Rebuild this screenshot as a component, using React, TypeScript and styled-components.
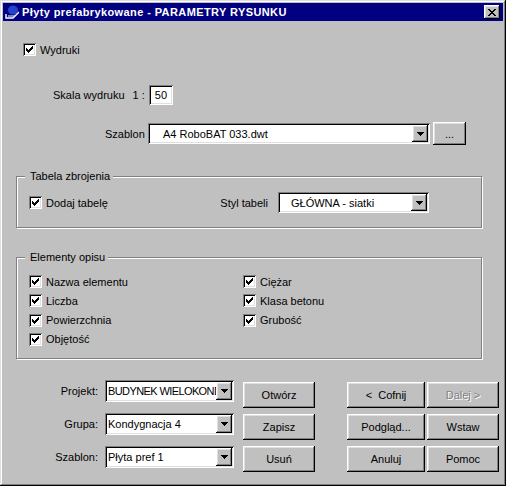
import React from 'react'
import styled, { createGlobalStyle } from 'styled-components'

const GlobalStyle = createGlobalStyle`
  html, body {
    margin: 0;
    padding: 0;
    background: #c0c0c0;
  }
  body {
    font-family: "Liberation Sans", Arial, sans-serif;
    font-size: 11px;
    color: #000;
  }
`

// classic 3D edges
const raised = 'inset -1px -1px #000, inset 1px 1px #fff, inset -2px -2px #808080, inset 2px 2px #dfdfdf'
const sunken = 'inset 1px 1px #808080, inset -1px -1px #fff, inset 2px 2px #000, inset -2px -2px #dfdfdf'

const CHECK_COLUMNS = [[3, 5], [4, 6], [5, 7], [6, 6], [7, 5], [8, 4], [9, 3]]
const CLOSE_ROWS = [[[0, 2], [6, 2]], [[1, 2], [5, 2]], [[2, 4]], [[3, 2]], [[2, 4]], [[1, 2], [5, 2]], [[0, 2], [6, 2]]]

export default function App () {
  return (
    <>
      <GlobalStyle />
      <Window>
        <TitleBar>
          <svg width="16" height="16" viewBox="0 0 16 16" style={{ marginRight: 3 }}>
            <ellipse cx="10" cy="6" rx="5" ry="4.5" fill="#2244cc" />
            <path d="M3 10 L3 14 L10 14 L16 8" stroke="#fff" strokeWidth="1.4" fill="none" />
            <path d="M5 12 L12 12" stroke="#fff" strokeWidth="1" />
          </svg>
          <Title>Płyty prefabrykowane - PARAMETRY RYSUNKU</Title>
          <CloseButton aria-label="Zamknij">
            <svg width="8" height="7" viewBox="0 0 8 7" shapeRendering="crispEdges">
              {CLOSE_ROWS.map((row, y) => row.map(([x, w]) => (
                <rect key={`${y}-${x}`} x={x} y={y} width={w} height="1" fill="#000" />
              )))}
            </svg>
          </CloseButton>
        </TitleBar>

        <Content>
          <PrintRow>
            <CheckBox label="Wydruki" />
          </PrintRow>

          <ScaleRow>
            <span>Skala wydruku</span>
            <Ratio>1 :</Ratio>
            <TextField>50</TextField>
          </ScaleRow>

          <TemplateRow>
            <RowLabel>Szablon</RowLabel>
            <Combo width={282} indent={12} value="A4 RoboBAT 033.dwt" />
            <Button $w={33} $h={23}>...</Button>
          </TemplateRow>

          <Group $mt={25} $pb={14}>
            <Legend>Tabela zbrojenia</Legend>
            <TableRow>
              <CheckBox label="Dodaj tabelę" />
              <StylePicker>
                <span>Styl tabeli</span>
                <Combo width={151} indent={10} value="GŁÓWNA - siatki" />
              </StylePicker>
            </TableRow>
          </Group>

          <Group $mt={23} $pb={12}>
            <Legend>Elementy opisu</Legend>
            <Columns>
              <CheckColumn $w={214}>
                <CheckBox label="Nazwa elementu" />
                <CheckBox label="Liczba" />
                <CheckBox label="Powierzchnia" />
                <CheckBox label="Objętość" />
              </CheckColumn>
              <CheckColumn>
                <CheckBox label="Ciężar" />
                <CheckBox label="Klasa betonu" />
                <CheckBox label="Grubość" />
              </CheckColumn>
            </Columns>
          </Group>

          <Footer>
            <FieldGrid>
              <FieldLabel>Projekt:</FieldLabel>
              <Combo width={129} height={22} indent={0} tight value="BUDYNEK WIELOKOND" />
              <FieldLabel>Grupa:</FieldLabel>
              <Combo width={129} height={22} indent={0} value="Kondygnacja 4" />
              <FieldLabel>Szablon:</FieldLabel>
              <Combo width={129} height={22} indent={0} value="Płyta pref 1" />
            </FieldGrid>
            <FileButtons>
              <Button>Otwórz</Button>
              <Button>Zapisz</Button>
              <Button>Usuń</Button>
            </FileButtons>
            <NavButtons>
              <Button>{'<  Cofnij'}</Button>
              <Button disabled>{'Dalej >'}</Button>
              <Button>Podgląd...</Button>
              <Button>Wstaw</Button>
              <Button>Anuluj</Button>
              <Button>Pomoc</Button>
            </NavButtons>
          </Footer>
        </Content>
      </Window>
    </>
  )
}

function CheckBox ({ label }: { label: string }) {
  return (
    <CheckLabel>
      <Box>
        <svg width="13" height="13" viewBox="0 0 13 13" shapeRendering="crispEdges">
          {CHECK_COLUMNS.map(([x, y]) => (
            <rect key={x} x={x} y={y} width="1" height="3" fill="#000" />
          ))}
        </svg>
      </Box>
      <span>{label}</span>
    </CheckLabel>
  )
}

function Combo ({ width, height = 21, indent, tight = false, value }: { width: number, height?: number, indent: number, tight?: boolean, value: string }) {
  return (
    <ComboBox $w={width} $h={height}>
      <ComboText $indent={indent} $tight={tight}>{value}</ComboText>
      <DropButton>
        <svg width="7" height="4" viewBox="0 0 7 4" shapeRendering="crispEdges">
          <rect x="0" y="0" width="7" height="1" fill="#000" />
          <rect x="1" y="1" width="5" height="1" fill="#000" />
          <rect x="2" y="2" width="3" height="1" fill="#000" />
          <rect x="3" y="3" width="1" height="1" fill="#000" />
        </svg>
      </DropButton>
    </ComboBox>
  )
}

const Window = styled.div`
  width: 506px;
  height: 486px;
  box-sizing: border-box;
  padding: 3px;
  background: #c0c0c0;
  box-shadow: inset -1px -1px #000, inset 1px 1px #dfdfdf, inset -2px -2px #808080, inset 2px 2px #fff;
  display: flex;
  flex-direction: column;
`
const TitleBar = styled.div`
  height: 18px;
  flex-shrink: 0;
  background: #000080;
  color: #fff;
  display: flex;
  align-items: center;
  padding: 0 3px 0 0;
`
const Title = styled.span`
  flex: 1;
  font-weight: bold;
  font-size: 11px;
  letter-spacing: 0.4px;
  white-space: nowrap;
`
const CloseButton = styled.button`
  width: 16px;
  height: 14px;
  padding: 0;
  border: 0;
  background: #c0c0c0;
  box-shadow: ${raised};
  display: flex;
  align-items: center;
  justify-content: center;
`
const Content = styled.div`
  flex: 1;
  display: flex;
  flex-direction: column;
  padding: 0 21px 0 13px;
`
const PrintRow = styled.div`
  margin: 22px 0 0 7px;
  display: flex;
`
const ScaleRow = styled.div`
  margin: 29px 0 0 37px;
  height: 20px;
  display: flex;
  align-items: center;
`
const Ratio = styled.span`
  margin: 0 4px 0 8px;
`
const TextField = styled.div`
  width: 24px;
  height: 20px;
  box-sizing: border-box;
  padding: 0 0 0 6px;
  background: #fff;
  box-shadow: ${sunken};
  display: flex;
  align-items: center;
`
const TemplateRow = styled.div`
  margin: 17px 0 0 89px;
  height: 23px;
  display: flex;
  align-items: center;
`
const RowLabel = styled.span`
  width: 43px;
`
const CheckLabel = styled.label`
  display: flex;
  align-items: center;
  gap: 4px;
  height: 13px;
  white-space: nowrap;
`
const Box = styled.span`
  width: 13px;
  height: 13px;
  flex-shrink: 0;
  background: #fff;
  box-shadow: ${sunken};
  display: block;
  svg { display: block; }
`
const ComboBox = styled.div<{ $w: number, $h: number }>`
  width: ${p => p.$w}px;
  height: ${p => p.$h}px;
  box-sizing: border-box;
  padding: 2px;
  background: #fff;
  box-shadow: ${sunken};
  display: flex;
  flex-shrink: 0;
`
const ComboText = styled.span<{ $indent: number, $tight: boolean }>`
  flex: 1;
  min-width: 0;
  padding-left: ${p => p.$indent + 1}px;
  letter-spacing: ${p => p.$tight ? '-0.6px' : 'normal'};
  overflow: hidden;
  white-space: nowrap;
  display: flex;
  align-items: center;
`
const DropButton = styled.span`
  width: 16px;
  flex-shrink: 0;
  background: #c0c0c0;
  box-shadow: ${raised};
  display: flex;
  align-items: center;
  justify-content: center;
`
const Button = styled.button<{ $w?: number, $h?: number }>`
  width: ${p => p.$w ? `${p.$w}px` : 'auto'};
  height: ${p => p.$h ?? 26}px;
  margin-left: ${p => p.$w ? '3px' : '0'};
  padding: 0;
  border: 0;
  background: #c0c0c0;
  box-shadow: ${raised};
  font: inherit;
  color: #000;
  white-space: pre;
  &:disabled {
    color: #808080;
    text-shadow: 1px 1px #fff;
  }
`
const Group = styled.fieldset<{ $mt: number, $pb: number }>`
  margin: ${p => p.$mt}px 0 0;
  padding: 0 0 ${p => p.$pb}px;
  min-inline-size: auto;
  border: 1px solid #808080;
  box-shadow: inset 1px 1px #fff, 1px 1px #fff;
`
const Legend = styled.legend`
  margin-left: 8px;
  padding: 0 3px 0 5px;
  line-height: 13px;
  background: #c0c0c0;
`
const TableRow = styled.div`
  margin-top: 9px;
  padding-left: 12px;
  height: 21px;
  display: flex;
  align-items: center;
`
const StylePicker = styled.div`
  margin: 0 52px 0 auto;
  display: flex;
  align-items: center;
  gap: 10px;
`
const Columns = styled.div`
  margin-top: 11px;
  padding-left: 12px;
  display: flex;
`
const CheckColumn = styled.div<{ $w?: number }>`
  width: ${p => p.$w ? `${p.$w}px` : 'auto'};
  display: flex;
  flex-direction: column;
  gap: 6.33px;
`
const Footer = styled.div`
  margin-top: 21px;
  display: flex;
  align-items: flex-start;
`
const FieldGrid = styled.div`
  display: grid;
  grid-template-columns: 82px 129px;
  grid-auto-rows: 22px;
  column-gap: 7px;
  row-gap: 11px;
  align-items: center;
`
const FieldLabel = styled.span`
  text-align: right;
`
const FileButtons = styled.div`
  margin: 2px 0 0 9px;
  display: grid;
  grid-template-columns: 72px;
  grid-auto-rows: 26px;
  row-gap: 6px;
`
const NavButtons = styled.div`
  margin: 2px 0 0 32px;
  display: grid;
  grid-template-columns: 78px 72px;
  grid-auto-rows: 26px;
  column-gap: 2px;
  row-gap: 6px;
`
